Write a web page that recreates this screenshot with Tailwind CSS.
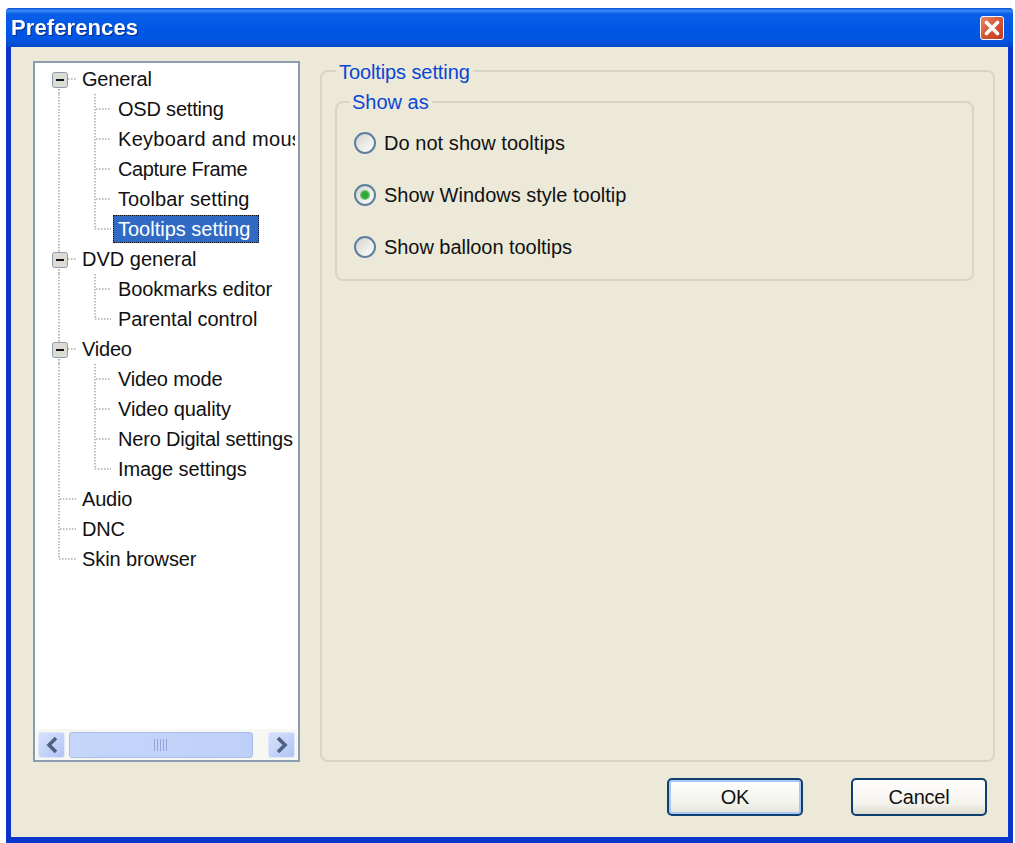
<!DOCTYPE html>
<html>
<head>
<meta charset="utf-8">
<title>Preferences</title>
<script src="https://cdn.jsdelivr.net/npm/@tailwindcss/browser@4"></script>
</head>
<body class="bg-white">
<div class="w-[1015px] h-[843px] pt-[8px] pl-[6px] overflow-hidden font-['Liberation_Sans',Arial,sans-serif] text-[20px] tracking-[-0.2px] text-[#111]">
  <div class="w-[1007px] h-[835px] flex flex-col rounded-t-[4px] bg-[#0a35cc] overflow-hidden">
    <!-- title bar -->
    <div class="h-[39px] shrink-0 flex items-center justify-between pl-[5px] pr-[9px] bg-[linear-gradient(180deg,#0a50d8_0%,#3a8cf5_7%,#0a5fe8_15%,#0058e6_50%,#0055e0_82%,#0048c8_100%)]">
      <span class="text-white font-bold text-[22px] tracking-[0.1px] drop-shadow-[1px_1px_0_#0a2a90]">Preferences</span>
      <button class="w-[24px] h-[24px] rounded-[3px] border border-white bg-[linear-gradient(135deg,#e8876a,#d4512e_55%,#c23a1c)] flex items-center justify-center">
        <svg width="16" height="16" viewBox="0 0 16 16"><path d="M2.5 2.5L13.5 13.5M13.5 2.5L2.5 13.5" stroke="#fff" stroke-width="3.6" stroke-linecap="round"/></svg>
      </button>
    </div>
    <!-- body -->
    <div class="flex-1 flex flex-col mx-[5px] mb-[6px] bg-[#ece9d8]">
      <div class="flex-1 flex pl-[22px] pr-[13px] pt-[14px] gap-[20px]">
        <!-- tree -->
        <div class="w-[267px] h-[701px] shrink-0 flex flex-col border-[2px] border-[#8a9cb0] bg-white">
          <div class="flex-1 overflow-hidden pt-[1px] mr-[3px]">
            <div class="h-[30px] flex items-center whitespace-nowrap"><svg class="shrink-0" width="47" height="30" viewBox="0 0 47 30"><path d="M24 25V30" stroke="#999" stroke-width="1.5" stroke-dasharray="1.5 1.5" fill="none"/><path d="M33 15H41" stroke="#aaa" stroke-width="1.5" stroke-dasharray="1.5 1.5" fill="none"/><rect x="17.5" y="8.5" width="15" height="15" rx="2" fill="#dcdcd4" stroke="#8c9cb0"/><path d="M21 16H29" stroke="#111" stroke-width="2"/></svg><span>General</span></div>
            <div class="h-[30px] flex items-center whitespace-nowrap"><svg class="shrink-0" width="83" height="30" viewBox="0 0 83 30"><path d="M24 0V30M60 0V30M61 15H76" stroke="#aaa" stroke-width="1.5" stroke-dasharray="1.5 1.5" fill="none"/></svg><span>OSD setting</span></div>
            <div class="h-[30px] flex items-center whitespace-nowrap"><svg class="shrink-0" width="83" height="30" viewBox="0 0 83 30"><path d="M24 0V30M60 0V30M61 15H76" stroke="#aaa" stroke-width="1.5" stroke-dasharray="1.5 1.5" fill="none"/></svg><span class="tracking-[0.3px]">Keyboard and mouse</span></div>
            <div class="h-[30px] flex items-center whitespace-nowrap"><svg class="shrink-0" width="83" height="30" viewBox="0 0 83 30"><path d="M24 0V30M60 0V30M61 15H76" stroke="#aaa" stroke-width="1.5" stroke-dasharray="1.5 1.5" fill="none"/></svg><span class="tracking-[-0.4px]">Capture Frame</span></div>
            <div class="h-[30px] flex items-center whitespace-nowrap"><svg class="shrink-0" width="83" height="30" viewBox="0 0 83 30"><path d="M24 0V30M60 0V30M61 15H76" stroke="#aaa" stroke-width="1.5" stroke-dasharray="1.5 1.5" fill="none"/></svg><span class="tracking-[0.1px]">Toolbar setting</span></div>
            <div class="h-[30px] flex items-center whitespace-nowrap"><svg class="shrink-0" width="78" height="30" viewBox="0 0 78 30"><path d="M24 0V30M60 0V15H76" stroke="#aaa" stroke-width="1.5" stroke-dasharray="1.5 1.5" fill="none"/></svg><span class="h-[28px] w-[146px] flex items-center pl-[4px] bg-[#316ac5] text-white border border-dotted border-[#111] tracking-[0px]">Tooltips setting</span></div>
            <div class="h-[30px] flex items-center whitespace-nowrap"><svg class="shrink-0" width="47" height="30" viewBox="0 0 47 30"><path d="M24 0V8M24 25V30" stroke="#999" stroke-width="1.5" stroke-dasharray="1.5 1.5" fill="none"/><path d="M33 15H41" stroke="#aaa" stroke-width="1.5" stroke-dasharray="1.5 1.5" fill="none"/><rect x="17.5" y="8.5" width="15" height="15" rx="2" fill="#dcdcd4" stroke="#8c9cb0"/><path d="M21 16H29" stroke="#111" stroke-width="2"/></svg><span class="tracking-[0px]">DVD general</span></div>
            <div class="h-[30px] flex items-center whitespace-nowrap"><svg class="shrink-0" width="83" height="30" viewBox="0 0 83 30"><path d="M24 0V30M60 0V30M61 15H76" stroke="#aaa" stroke-width="1.5" stroke-dasharray="1.5 1.5" fill="none"/></svg><span class="tracking-[-0.1px]">Bookmarks editor</span></div>
            <div class="h-[30px] flex items-center whitespace-nowrap"><svg class="shrink-0" width="83" height="30" viewBox="0 0 83 30"><path d="M24 0V30M60 0V15H76" stroke="#aaa" stroke-width="1.5" stroke-dasharray="1.5 1.5" fill="none"/></svg><span class="tracking-[-0.05px]">Parental control</span></div>
            <div class="h-[30px] flex items-center whitespace-nowrap"><svg class="shrink-0" width="47" height="30" viewBox="0 0 47 30"><path d="M24 0V8M24 25V30" stroke="#999" stroke-width="1.5" stroke-dasharray="1.5 1.5" fill="none"/><path d="M33 15H41" stroke="#aaa" stroke-width="1.5" stroke-dasharray="1.5 1.5" fill="none"/><rect x="17.5" y="8.5" width="15" height="15" rx="2" fill="#dcdcd4" stroke="#8c9cb0"/><path d="M21 16H29" stroke="#111" stroke-width="2"/></svg><span>Video</span></div>
            <div class="h-[30px] flex items-center whitespace-nowrap"><svg class="shrink-0" width="83" height="30" viewBox="0 0 83 30"><path d="M24 0V30M60 0V30M61 15H76" stroke="#aaa" stroke-width="1.5" stroke-dasharray="1.5 1.5" fill="none"/></svg><span>Video mode</span></div>
            <div class="h-[30px] flex items-center whitespace-nowrap"><svg class="shrink-0" width="83" height="30" viewBox="0 0 83 30"><path d="M24 0V30M60 0V30M61 15H76" stroke="#aaa" stroke-width="1.5" stroke-dasharray="1.5 1.5" fill="none"/></svg><span class="tracking-[-0.1px]">Video quality</span></div>
            <div class="h-[30px] flex items-center whitespace-nowrap"><svg class="shrink-0" width="83" height="30" viewBox="0 0 83 30"><path d="M24 0V30M60 0V30M61 15H76" stroke="#aaa" stroke-width="1.5" stroke-dasharray="1.5 1.5" fill="none"/></svg><span>Nero Digital settings</span></div>
            <div class="h-[30px] flex items-center whitespace-nowrap"><svg class="shrink-0" width="83" height="30" viewBox="0 0 83 30"><path d="M24 0V30M60 0V15H76" stroke="#aaa" stroke-width="1.5" stroke-dasharray="1.5 1.5" fill="none"/></svg><span class="tracking-[-0.1px]">Image settings</span></div>
            <div class="h-[30px] flex items-center whitespace-nowrap"><svg class="shrink-0" width="47" height="30" viewBox="0 0 47 30"><path d="M24 0V30M25 15H41" stroke="#aaa" stroke-width="1.5" stroke-dasharray="1.5 1.5" fill="none"/></svg><span>Audio</span></div>
            <div class="h-[30px] flex items-center whitespace-nowrap"><svg class="shrink-0" width="47" height="30" viewBox="0 0 47 30"><path d="M24 0V30M25 15H41" stroke="#aaa" stroke-width="1.5" stroke-dasharray="1.5 1.5" fill="none"/></svg><span>DNC</span></div>
            <div class="h-[30px] flex items-center whitespace-nowrap"><svg class="shrink-0" width="47" height="30" viewBox="0 0 47 30"><path d="M24 0V15H41" stroke="#aaa" stroke-width="1.5" stroke-dasharray="1.5 1.5" fill="none"/></svg><span class="tracking-[-0.1px]">Skin browser</span></div>
          </div>
          <!-- horizontal scrollbar -->
          <div class="h-[31px] shrink-0 flex items-center px-[3px] gap-[4px] bg-[#f7f7f3]">
            <div class="w-[27px] h-[26px] rounded-[3px] border border-[#dfe7fa] bg-[linear-gradient(135deg,#d8e2fc,#b0c4f4)] flex items-center justify-center"><svg width="14" height="18" viewBox="0 0 14 18"><path d="M11 2L4 9L11 16" fill="none" stroke="#4d6185" stroke-width="3.6"/></svg></div>
            <div class="w-[184px] h-[26px] rounded-[3px] border border-[#a9bde8] bg-[linear-gradient(90deg,#c6d5fa,#bfd0f8)] flex items-center justify-center"><svg width="16" height="12" viewBox="0 0 16 12"><path d="M1.5 0V12M4.5 0V12M7.5 0V12M10.5 0V12M13.5 0V12" stroke="#8fa5dc" stroke-width="1"/></svg></div>
            <div class="flex-1"></div>
            <div class="w-[27px] h-[26px] rounded-[3px] border border-[#dfe7fa] bg-[linear-gradient(135deg,#d8e2fc,#b0c4f4)] flex items-center justify-center"><svg width="14" height="18" viewBox="0 0 14 18"><path d="M3 2L10 9L3 16" fill="none" stroke="#4d6185" stroke-width="3.6"/></svg></div>
          </div>
        </div>
        <!-- right panel -->
        <div class="relative w-[675px] h-[692px] mt-[9px] border-[2px] border-[#d9d5c3] rounded-[8px] px-[13px] pt-[29px]">
          <span class="absolute -top-[12px] left-[14px] px-[3px] bg-[#ece9d8] leading-[24px] text-[#0a46d5] tracking-[-0.1px]">Tooltips setting</span>
          <div class="relative w-[639px] h-[180px] border-[2px] border-[#d9d5c3] rounded-[8px] pl-[17px] pt-[25px] flex flex-col gap-[22px]">
            <span class="absolute -top-[13px] left-[12px] px-[3px] bg-[#ece9d8] leading-[24px] text-[#0a46d5] tracking-[0px]">Show as</span>
            <label class="h-[30px] flex items-center gap-[8px] tracking-[0.05px]"><span class="w-[22px] h-[22px] rounded-full border-[2px] border-[#5f7f9f] bg-[linear-gradient(135deg,#d4d4cc,#ffffff)]"></span><span>Do not show tooltips</span></label>
            <label class="h-[30px] flex items-center gap-[8px] tracking-[0px]"><span class="w-[22px] h-[22px] rounded-full border-[2px] border-[#5f7f9f] bg-[linear-gradient(135deg,#d4d4cc,#ffffff)] flex items-center justify-center"><span class="w-[10px] h-[10px] rounded-full bg-[radial-gradient(circle,#2fa838_40%,#bfe6bf_100%)]"></span></span><span>Show Windows style tooltip</span></label>
            <label class="h-[30px] flex items-center gap-[8px] tracking-[-0.05px]"><span class="w-[22px] h-[22px] rounded-full border-[2px] border-[#5f7f9f] bg-[linear-gradient(135deg,#d4d4cc,#ffffff)]"></span><span>Show balloon tooltips</span></label>
          </div>
        </div>
      </div>
      <!-- buttons -->
      <div class="h-[61px] shrink-0 flex justify-end pr-[21px] pt-[2px] gap-[48px]">
        <button class="w-[136px] h-[38px] rounded-[5px] border-[2px] border-[#0f3f70] bg-[linear-gradient(180deg,#fff,#f2f1ea_70%,#e4e2d8)] shadow-[inset_0_0_0_2px_#a6c8f2]">OK</button>
        <button class="w-[136px] h-[38px] rounded-[5px] border-[2px] border-[#0f3f70] bg-[linear-gradient(180deg,#fff,#f4f3ee_70%,#dcd9cd)]">Cancel</button>
      </div>
    </div>
  </div>
</div>
</body>
</html>
